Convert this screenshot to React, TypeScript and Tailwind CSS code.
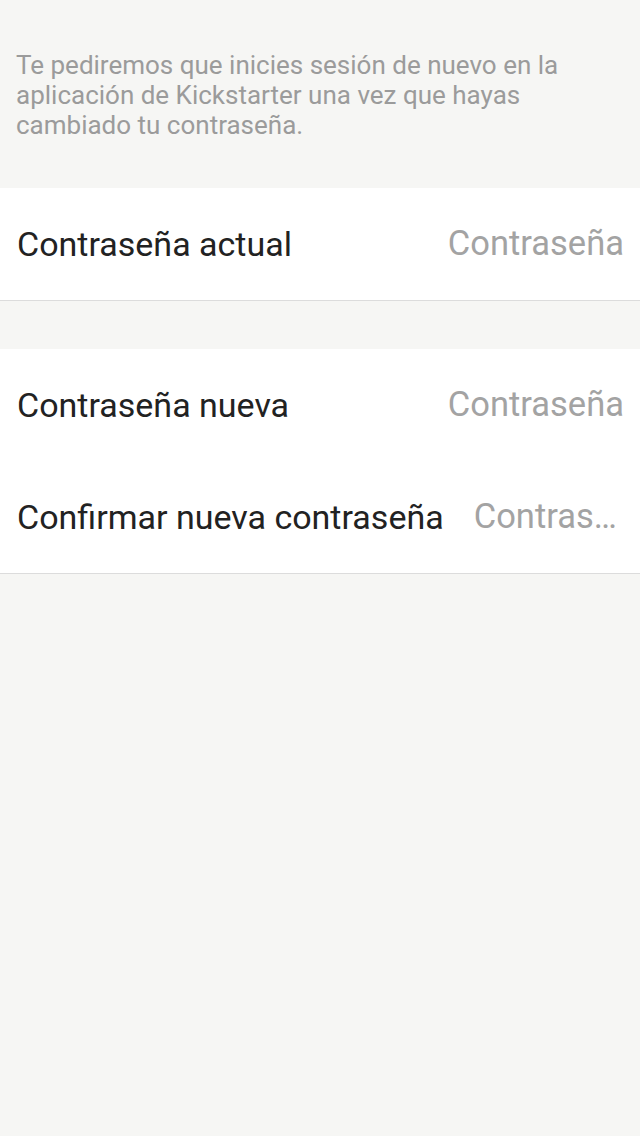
const rows = [
  { label: "Contraseña actual", placeholder: "Contraseña" },
];

const rows2 = [
  { label: "Contraseña nueva", placeholder: "Contraseña" },
  { label: "Confirmar nueva contraseña", placeholder: "Contraseña" },
];

const Row = ({ label, placeholder }: { label: string; placeholder: string }) => (
  <div className="flex items-center h-[112px] pl-[17px] pr-4 gap-[30px]">
    <span className="text-[34px] text-[#222222] whitespace-nowrap shrink-0">{label}</span>
    <span className="flex-1 min-w-0 text-right text-[34.5px] text-[#a3a3a3] truncate">
      {placeholder}
    </span>
  </div>
);

export default function App() {
  return (
    <div
      className="min-h-[1136px] w-full bg-[#f6f6f4]"
      style={{ fontFamily: "Roboto, 'Liberation Sans', sans-serif" }}
    >
      <p className="px-4 pt-[50px] pb-[48px] text-[26px] leading-[30px] text-[#9b9b9b]">
        Te pediremos que inicies sesión de nuevo en la aplicación de Kickstarter una vez que
        hayas cambiado tu contraseña.
      </p>
      <div className="bg-white border-b border-[#dcdcdc]">
        {rows.map((r) => (
          <Row key={r.label} {...r} />
        ))}
      </div>
      <div className="h-[48px]" />
      <div className="bg-white border-b border-[#dcdcdc]">
        {rows2.map((r) => (
          <Row key={r.label} {...r} />
        ))}
      </div>
    </div>
  );
}
